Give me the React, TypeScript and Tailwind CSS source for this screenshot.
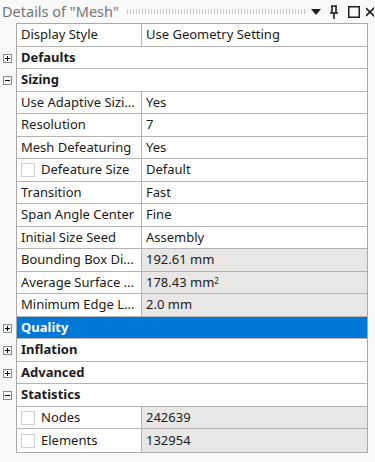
import React from "react";

type Row =
  | { kind: "prop"; label: string; value: React.ReactNode; check?: boolean; ro?: boolean }
  | { kind: "cat"; label: string; open: boolean; selected?: boolean };

const rows: Row[] = [
  { kind: "prop", label: "Display Style", value: "Use Geometry Setting" },
  { kind: "cat", label: "Defaults", open: false },
  { kind: "cat", label: "Sizing", open: true },
  { kind: "prop", label: "Use Adaptive Sizi...", value: "Yes" },
  { kind: "prop", label: "Resolution", value: "7" },
  { kind: "prop", label: "Mesh Defeaturing", value: "Yes" },
  { kind: "prop", label: "Defeature Size", value: "Default", check: true },
  { kind: "prop", label: "Transition", value: "Fast" },
  { kind: "prop", label: "Span Angle Center", value: "Fine" },
  { kind: "prop", label: "Initial Size Seed", value: "Assembly" },
  { kind: "prop", label: "Bounding Box Di...", value: "192.61 mm", ro: true },
  {
    kind: "prop",
    label: "Average Surface ...",
    value: (
      <>
        178.43 mm<sup className="text-[8px] relative -top-[2px]">2</sup>
      </>
    ),
    ro: true,
  },
  { kind: "prop", label: "Minimum Edge L...", value: "2.0 mm", ro: true },
  { kind: "cat", label: "Quality", open: false, selected: true },
  { kind: "cat", label: "Inflation", open: false },
  { kind: "cat", label: "Advanced", open: false },
  { kind: "cat", label: "Statistics", open: true },
  { kind: "prop", label: "Nodes", value: "242639", check: true, ro: true },
  { kind: "prop", label: "Elements", value: "132954", check: true, ro: true },
];

function Expander({ open }: { open: boolean }) {
  return (
    <div className="relative w-[9px] h-[9px] border border-[#8a8a8a] bg-white">
      <div className="absolute left-[1px] right-[1px] top-[3px] h-[1px] bg-black" />
      {!open && <div className="absolute top-[1px] bottom-[1px] left-[3px] w-[1px] bg-black" />}
    </div>
  );
}

function Check() {
  return <div className="w-[14px] h-[14px] border border-[#d0d0d0] bg-white shrink-0" />;
}

export default function App() {
  return (
    <div
      className="w-[375px] h-[462px] bg-[#f9f9f9] overflow-hidden text-[#1b1b1b]"
      style={{ fontFamily: '"Noto Sans", "Open Sans", sans-serif' }}
    >
      {/* title bar */}
      <div className="h-[23px] flex items-center pl-[2px] pr-0">
        <span className="text-[14.5px] text-[#757575] whitespace-nowrap leading-none">Details of "Mesh"</span>
        <div className="ml-[7px] w-[180px] h-[5px] bg-[radial-gradient(circle,#c8c8c8_0.8px,transparent_0.9px)] bg-[length:3px_2px]" />
        <svg width="10" height="6" viewBox="0 0 10 6" className="ml-[5px]">
          <path d="M0 0 H10 L5 6 Z" fill="#1e1e1e" />
        </svg>
        <svg width="10" height="14" viewBox="0 0 10 14" className="ml-[8px]">
          <path d="M2 1 H8 M3 1 V8 M7 1 V8 M1 8 H9 M5 8 V14" stroke="#1e1e1e" strokeWidth="1.6" fill="none" />
        </svg>
        <svg width="12" height="12" viewBox="0 0 12 12" className="ml-[9px]">
          <rect x="0.75" y="0.75" width="10.5" height="10.5" stroke="#1e1e1e" strokeWidth="1.5" fill="none" />
        </svg>
        <svg width="8" height="10" viewBox="0 0 8 10" className="ml-[6px]">
          <path d="M0 1 L9 10 M9 0 L0 9" stroke="#1e1e1e" strokeWidth="1.6" />
        </svg>
      </div>

      {/* grid */}
      <div className="flex">
        <div className="w-[16px] flex flex-col pt-[1px]">
          {rows.map((r, i) => (
            <div
              key={i}
              className={`${i % 2 === 0 ? "h-[23px]" : "h-[22px]"} flex items-center pl-[3px]`}
            >
              {r.kind === "cat" && <Expander open={r.open} />}
            </div>
          ))}
        </div>
        <div className="w-[352px] border border-[#a9a9a9] bg-white text-[13px]">
          {rows.map((r, i) => {
            const h = i % 2 === 0 ? "h-[23px]" : "h-[22px]";
            const last = i === rows.length - 1;
            const bb = last ? "" : "border-b border-[#b4b4b4]";
            if (r.kind === "cat") {
              return (
                <div
                  key={i}
                  className={`${h} ${bb} flex items-center pl-[4px] font-bold ${
                    r.selected ? "bg-[#0078d7] text-white" : ""
                  }`}
                >
                  {r.label}
                </div>
              );
            }
            return (
              <div key={i} className={`${h} ${bb} flex`}>
                <div className="w-[125px] border-r border-[#b4b4b4] flex items-center pl-[4px] gap-[6px] whitespace-nowrap overflow-hidden">
                  {r.check && <Check />}
                  <span>{r.label}</span>
                </div>
                <div
                  className={`flex-1 flex items-center pl-[4px] whitespace-nowrap ${
                    r.ro ? "bg-[#e8e7e5]" : ""
                  }`}
                >
                  {r.value}
                </div>
              </div>
            );
          })}
        </div>
      </div>
    </div>
  );
}
